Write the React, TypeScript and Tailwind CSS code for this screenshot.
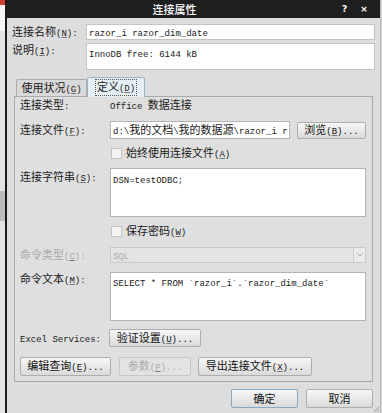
import React from "react";

const CJK = /([\u3000-\u303f\u4e00-\u9fff\uff00-\uffef]+)/;

// 中文用黑体 11px，半角字符用等宽 9px（模仿宋体的半角宽度）
function T({ s, className = "" }: { s: string; className?: string }) {
  const parts = s.split(CJK).filter((p) => p !== "");
  return (
    <span className={`whitespace-pre leading-none ${className}`}>
      {parts.map((p, i) =>
        CJK.test(p) ? (
          <span key={i} className="text-[11px] font-['Noto_Sans_CJK_SC',sans-serif]">
            {p}
          </span>
        ) : (
          <span key={i} className="text-[9px] font-['Liberation_Mono','Noto_Sans_CJK_SC',monospace]">
            {p.split(/(\([A-Z]\))/).map((q, j) =>
              /^\([A-Z]\)$/.test(q) ? (
                <span key={j}>
                  (<span className="underline underline-offset-1 decoration-[#777]">{q[1]}</span>)
                </span>
              ) : (
                <span key={j}>{q}</span>
              )
            )}
          </span>
        )
      )}
    </span>
  );
}

function Btn({ s, w, disabled, primary }: { s: string; w: string; disabled?: boolean; primary?: boolean }) {
  return (
    <div
      className={`${w} h-full flex items-center justify-center rounded-[2px] border ${
        disabled
          ? "border-[#c6c6c6] bg-[#e3e3e3] text-[#ababab]"
          : primary
          ? "border-[#86a9c6] bg-linear-to-b from-[#f7f7f7] to-[#dadada] text-[#111]"
          : "border-[#adadad] bg-linear-to-b from-[#f7f7f7] to-[#dadada] text-[#111]"
      }`}
    >
      <T s={s} />
    </div>
  );
}

function Check({ s }: { s: string }) {
  return (
    <div className="h-[12px] flex items-center pl-[91px] gap-[4px] text-[#1a1a1a]">
      <div className="w-[11px] h-[11px] bg-[#f4f4f4] border border-[#c2c2c2]" />
      <T s={s} />
    </div>
  );
}

export default function App() {
  return (
    <div className="w-[382px] h-[413px] flex bg-[#dcdcdc] overflow-hidden text-[11px] leading-none">
      {/* 对话框后面的窗口 */}
      <div className="w-[5px] flex flex-col">
        <div className="h-[5px] bg-[#cf3b30]" />
        <div className="h-[26px] bg-[#f6f6f6]" />
        <div className="h-[160px] bg-[#e4e4e4]" />
        <div className="h-[30px] bg-[#bdbdbd]" />
        <div className="flex-1 bg-[#e4e4e4]" />
      </div>

      <div className="relative w-[376px] flex flex-col border-l-2 border-l-[#1b1b1b] border-r border-r-[#b8b8b8] bg-[#dddddd]">
        {/* 标题栏 */}
        <div className="h-[18px] shrink-0 flex items-center bg-[#1f1f1f] text-white">
          <div className="flex-1 text-center font-medium">
            <T s="连接属性" />
          </div>
          <div className="w-[38px] flex items-center gap-[13px] text-[9px] font-bold font-['DejaVu_Sans',sans-serif]">
            <span>?</span>
            <span>×</span>
          </div>
        </div>

        <div className="flex flex-col px-[5px] text-[#1a1a1a]">
          <div className="mt-[6px] h-[16px] flex items-center">
            <div className="w-[74px]">
              <T s="连接名称(N):" />
            </div>
            <div className="flex-1 h-full flex items-center bg-white border border-[#c4c4c4] pl-[2px]">
              <T s="razor_i razor_dim_date" />
            </div>
          </div>
          <div className="mt-[3px] h-[27px] flex">
            <div className="w-[74px] pt-[1px]">
              <T s="说明(I):" />
            </div>
            <div className="flex-1 h-full bg-white border border-[#c4c4c4] pl-[2px] pt-[3px]">
              <T s="InnoDB free: 6144 kB" />
            </div>
          </div>

          {/* 选项卡 */}
          <div className="mt-[6px] h-[20px] flex items-end pl-[4px]">
            <div className="h-[17px] w-[71px] flex items-center justify-center border border-b-0 border-[#acacac] bg-[#d9d9d9] rounded-t-[2px]">
              <T s="使用状况(G)" />
            </div>
            <div className="relative top-[1px] h-[20px] w-[58px] flex items-center justify-center border border-b-0 border-[#9fb4c0] bg-[#e5eef2] rounded-t-[2px]">
              <div className="px-[1px] py-[1px] border border-dotted border-[#555]">
                <T s="定义(D)" />
              </div>
            </div>
          </div>

          <div className="mx-[2px] h-[286px] flex flex-col border border-[#a9a9a9] bg-[#dfdfdf] pl-[5px] pr-[6px]">
            <div className="h-[16px] flex items-center">
              <div className="w-[90px]">
                <T s="连接类型:" />
              </div>
              <T s="Office 数据连接" />
            </div>

            <div className="mt-[8px] h-[18px] flex items-center gap-[7px]">
              <div className="w-[90px] shrink-0">
                <T s="连接文件(F):" />
              </div>
              <div className="flex-1 -ml-[7px] h-full flex items-center bg-white border border-[#b4b4b4] pl-[2px] overflow-hidden">
                <T s="d:\我的文档\我的数据源\razor_i r" />
              </div>
              <div className="h-[17px]">
                <Btn s="浏览(B)..." w="w-[69px]" />
              </div>
            </div>

            <div className="mt-[8px]">
              <Check s="始终使用连接文件(A)" />
            </div>

            <div className="mt-[9px] h-[49px] flex">
              <div className="w-[90px] pt-[3px]">
                <T s="连接字符串(S):" />
              </div>
              <div className="flex-1 h-full bg-white border border-[#b4b4b4] pl-[2px] pt-[4px]">
                <T s="DSN=testODBC;" />
              </div>
            </div>

            <div className="mt-[8px]">
              <Check s="保存密码(W)" />
            </div>

            <div className="mt-[10px] h-[16px] flex items-center text-[#a9a9a9]">
              <div className="w-[90px]">
                <T s="命令类型(C):" />
              </div>
              <div className="flex-1 h-full flex items-center bg-[#e4e4e4] border border-[#c9c9c9] pl-[2px]">
                <div className="flex-1">
                  <T s="SQL" />
                </div>
                <div className="w-[12px] h-full flex items-center justify-center border-l border-[#d0d0d0] bg-[#ebebeb]">
                  <svg width="6" height="4" viewBox="0 0 6 4">
                    <path d="M0.5 0.5 L3 3 L5.5 0.5" fill="none" stroke="#a0a0a0" strokeWidth="1" />
                  </svg>
                </div>
              </div>
            </div>

            <div className="mt-[9px] h-[49px] flex">
              <div className="w-[90px] pt-[1px]">
                <T s="命令文本(M):" />
              </div>
              <div className="flex-1 h-full bg-white border border-[#b4b4b4] pl-[2px] pt-[3px]">
                <T s="SELECT * FROM `razor_i`.`razor_dim_date`" />
              </div>
            </div>

            <div className="mt-[8px] h-[18px] flex items-center">
              <div className="w-[89px]">
                <T s="Excel Services:" />
              </div>
              <Btn s="验证设置(U)..." w="w-[92px]" />
            </div>

            <div className="mt-[10px] h-[19px] flex gap-[8px]">
              <Btn s="编辑查询(E)..." w="w-[91px]" />
              <Btn s="参数(P)..." w="w-[72px]" disabled />
              <Btn s="导出连接文件(X)..." w="w-[114px] -ml-[1px]" />
            </div>
          </div>

          <div className="mt-[7px] h-[19px] flex justify-end gap-[8px] pr-[2px]">
            <Btn s="确定" w="w-[67px]" primary />
            <Btn s="取消" w="w-[67px]" />
          </div>
        </div>

        {/* 右下角拖动柄 */}
        <svg className="absolute right-0 bottom-0" width="8" height="8" viewBox="0 0 8 8">
          <path d="M7 2 L2 7 M7 5 L5 7" stroke="#9a9a9a" strokeWidth="1" />
        </svg>
      </div>
      <div className="w-px bg-[#d6d6d6]" />
    </div>
  );
}
